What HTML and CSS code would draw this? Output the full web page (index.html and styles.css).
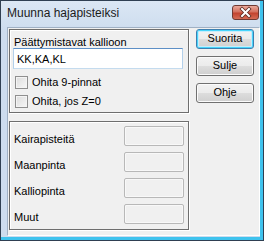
FILE: index.html
```html
<!DOCTYPE html>
<html lang="fi">
<head>
<meta charset="utf-8">
<title>Muunna hajapisteiksi</title>
<link rel="stylesheet" href="styles.css">
</head>
<body>
<div class="window">
  <div class="titlebar">
    <span class="title">Muunna hajapisteiksi</span>
    <span class="close">
      <svg width="25" height="13" viewBox="0 0 25 13">
        <path d="M9 3 L16 10 M16 3 L9 10" stroke="#5b2a22" stroke-width="3.6" stroke-linecap="square" fill="none"/>
        <path d="M9 3 L16 10 M16 3 L9 10" stroke="#ffffff" stroke-width="2" stroke-linecap="square" fill="none"/>
      </svg>
    </span>
  </div>
  <div class="client">
    <div class="left">
      <div class="group g1">
        <div class="label">Päättymistavat kallioon</div>
        <div class="input">KK,KA,KL</div>
        <div class="check"><span class="box"></span><span>Ohita 9-pinnat</span></div>
        <div class="check"><span class="box"></span><span>Ohita, jos Z=0</span></div>
      </div>
      <div class="group g2">
        <div class="row"><span>Kairapisteitä</span><span class="field"></span></div>
        <div class="row"><span>Maanpinta</span><span class="field"></span></div>
        <div class="row"><span>Kalliopinta</span><span class="field"></span></div>
        <div class="row"><span>Muut</span><span class="field"></span></div>
      </div>
    </div>
    <div class="buttons">
      <div class="btn default">Suorita</div>
      <div class="btn">Sulje</div>
      <div class="btn">Ohje</div>
    </div>
  </div>
</div>
</body>
</html>
```
FILE: styles.css
```css
html, body {
  margin: 0;
  padding: 0;
  background: #ffffff;
}
body {
  font-family: "Liberation Sans", Arial, sans-serif;
  font-size: 11px;
  color: #000000;
}
.window {
  box-sizing: border-box;
  width: 264px;
  height: 241px;
  border: 1px solid #2f3f52;
  background: linear-gradient(#dbe7f4, #cddcee 30px, #cddcee);
  padding: 0 3px 4px 6px;
  display: flex;
  flex-direction: column;
  box-shadow: inset -3px -3px 0 #3fc3ee;
}
.titlebar {
  height: 26px;
  margin-left: -6px;
  margin-right: -3px;
  padding: 4px 4px 0 6px;
  box-sizing: border-box;
  display: flex;
  align-items: flex-start;
  flex: none;
}
.title {
  margin-top: 1px;
  font-size: 12px;
  line-height: 15px;
  color: #1b1b1b;
}
.close {
  margin-left: auto;
  width: 27px;
  height: 15px;
  box-sizing: border-box;
  border: 1px solid #6f3a33;
  border-radius: 3px;
  background: linear-gradient(#e9a99b, #d4705e 45%, #c2432f 55%, #d56b55);
  display: flex;
  align-items: center;
  justify-content: center;
}
.close svg {
  display: block;
}
.client {
  flex: 1;
  display: flex;
  align-items: flex-start;
  background: #f0f0f0;
  border: 1px solid;
  border-color: #9fb0c4 #ffffff #ffffff #9fb0c4;
}
.left {
  display: flex;
  flex-direction: column;
  gap: 8px;
  margin: 1px 0 0 1px;
}
.group {
  box-sizing: border-box;
  width: 180px;
  border: 1px solid #6e6e6e;
  box-shadow: inset 1px 1px 0 #ffffff, 1px 1px 0 #ffffff;
}
.g1 {
  height: 84px;
  padding: 6px 4px 0 3px;
}
.label {
  line-height: 12px;
  padding-left: 1px;
}
.input {
  box-sizing: border-box;
  height: 21px;
  width: 170px;
  background: #ffffff;
  border: 1px solid;
  border-color: #5d8fc6 #b3d0ea #c4dbee #b3d0ea;
  padding: 2px 0 0 3px;
  line-height: 17px;
}
.check {
  display: flex;
  align-items: center;
  gap: 4px;
  height: 13px;
  line-height: 13px;
  margin: 7px 0 0 2px;
}
.check + .check {
  margin-top: 6px;
}
.box {
  box-sizing: border-box;
  width: 13px;
  height: 13px;
  border: 1px solid #8f8f8f;
  background: linear-gradient(135deg, #dcdcdc, #f7f7f7);
  box-shadow: inset 0 0 0 1px #f4f4f4;
}
.g2 {
  height: 109px;
  padding: 4px 4px 0 4px;
  display: flex;
  flex-direction: column;
  gap: 6px;
}
.row {
  display: flex;
  justify-content: space-between;
  align-items: flex-end;
  height: 20px;
}
.row span:first-child {
  line-height: 13px;
}
.field {
  box-sizing: border-box;
  width: 60px;
  height: 20px;
  border: 1px solid #b8b8b8;
  border-radius: 2px;
  background: #f0f0f0;
  box-shadow: inset 0 0 0 1px #f8f8f8;
}
.buttons {
  display: flex;
  flex-direction: column;
  gap: 7px;
  margin: 1px 0 0 7px;
}
.btn {
  box-sizing: border-box;
  width: 58px;
  height: 20px;
  border: 1px solid #707070;
  border-radius: 3px;
  background: linear-gradient(#f2f2f2, #ebebeb 50%, #dddddd 50%, #cfcfcf);
  box-shadow: inset 0 0 0 1px #fbfbfb;
  text-align: center;
  line-height: 17px;
  font-size: 11px;
}
.btn.default {
  border-color: #3c7fb1;
  box-shadow: inset 0 0 0 1px #48d5fb, inset 0 0 0 2px #c6ecfb;
  background: linear-gradient(#f2f2f2, #ebebeb 50%, #dddddd 50%, #cfcfcf);
}
```
